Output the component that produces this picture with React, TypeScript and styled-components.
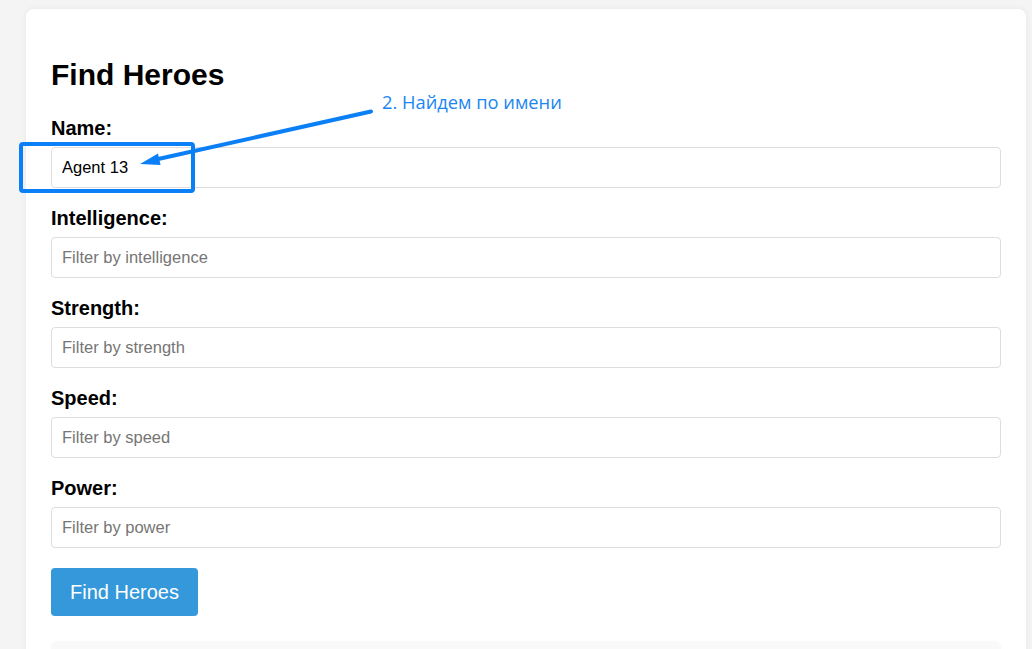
import React from "react";
import styled, { createGlobalStyle } from "styled-components";

const Global = createGlobalStyle`
  html, body { margin: 0; padding: 0; }
  body {
    background: #f4f4f4;
    font-family: "Liberation Sans", Arial, sans-serif;
    color: #000;
  }
  * { box-sizing: border-box; }
`;

const Page = styled.div`
  position: relative;
  padding: 9px 6px 0 26px;
  height: 649px;
  overflow: hidden;
`;

const Card = styled.div`
  width: 1000px;
  background: #fff;
  border-radius: 8px;
  box-shadow: 0 0 6px rgba(0, 0, 0, 0.06);
  padding: 25px 25px 20px;
  min-height: 700px;
`;

const Title = styled.h1`
  font-size: 30px;
  font-weight: bold;
  margin: 24px 0 25px;
  line-height: 34px;
  color: #000;
`;

const Form = styled.form`
  display: flex;
  flex-direction: column;
`;

const Group = styled.div`
  display: flex;
  flex-direction: column;
  margin-bottom: 19px;
`;

const Label = styled.label`
  font-size: 20px;
  font-weight: bold;
  line-height: 23px;
  margin-bottom: 7px;
  color: #000;
`;

const Input = styled.input`
  width: 100%;
  height: 41px;
  padding: 0 10px;
  font-family: "Liberation Sans", Arial, sans-serif;
  font-size: 16.5px;
  color: #000;
  border: 1px solid #ddd;
  border-radius: 4px;
  background: #fff;
  outline: none;
  &::placeholder { color: #757575; }
`;

const Button = styled.button`
  align-self: flex-start;
  margin-top: 1px;
  height: 48px;
  padding: 0 19px;
  background: #3498db;
  color: #fff;
  font-family: "Liberation Sans", Arial, sans-serif;
  font-size: 20px;
  border: none;
  border-radius: 4px;
`;

const Results = styled.div`
  margin-top: 25px;
  height: 80px;
  background: #f9f9f9;
  border-radius: 6px;
`;

const Overlay = styled.svg`
  position: absolute;
  left: 0;
  top: 0;
  pointer-events: none;
`;

const Note = styled.div`
  position: absolute;
  left: 382px;
  top: 90px;
  font-family: "Open Sans", "Noto Sans", sans-serif;
  font-size: 18.3px;
  line-height: 24px;
  color: #1a86f2;
  white-space: nowrap;
`;

const fields = [
  { label: "Name:", placeholder: "Filter by name", value: "Agent 13" },
  { label: "Intelligence:", placeholder: "Filter by intelligence" },
  { label: "Strength:", placeholder: "Filter by strength" },
  { label: "Speed:", placeholder: "Filter by speed" },
  { label: "Power:", placeholder: "Filter by power" },
];

export default function App() {
  return (
    <>
      <Global />
      <Page>
        <Card>
          <Title>Find Heroes</Title>
          <Form onSubmit={(e) => e.preventDefault()}>
            {fields.map((f) => (
              <Group key={f.label}>
                <Label>{f.label}</Label>
                <Input placeholder={f.placeholder} defaultValue={f.value} />
              </Group>
            ))}
            <Button type="submit">Find Heroes</Button>
          </Form>
          <Results />
        </Card>
        <Overlay width="1032" height="649" viewBox="0 0 1032 649">
          <rect x="21" y="144" width="172" height="47" rx="2" fill="none" stroke="#0b7ff5" strokeWidth="4" />
          <line x1="371" y1="111.5" x2="156" y2="159.5" stroke="#0b7ff5" strokeWidth="4" strokeLinecap="round" />
          <polygon points="140,164 158,153.5 160.5,165" fill="#0b7ff5" />
        </Overlay>
        <Note>2. Найдем по имени</Note>
      </Page>
    </>
  );
}
